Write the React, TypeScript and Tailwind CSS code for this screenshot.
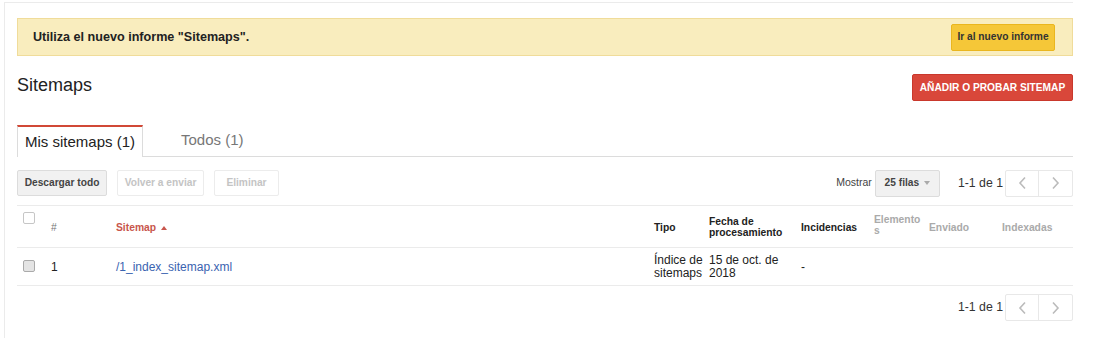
import React from 'react'

const FONT = { fontFamily: '"Liberation Sans", Arial, sans-serif' }

const COLS = 'grid grid-cols-[28px_65px_538px_55px_92px_73px_55px_73px_77px]'

function Pager() {
  return (
    <div className="flex items-center">
      <span className="text-[12.3px] text-[#333] mr-[2px]">1-1 de 1</span>
      <div className="flex h-[27px] border border-[#e8e8e8] rounded-[2px]">
        <button className="w-[33px] flex items-center justify-center border-r border-[#e8e8e8] text-[#bbb]">
          <svg width="9" height="14" viewBox="0 0 9 14" fill="none" stroke="currentColor" strokeWidth="1.6">
            <path d="M7 1.5L2 7l5 5.5" />
          </svg>
        </button>
        <button className="w-[33px] flex items-center justify-center text-[#bbb]">
          <svg width="9" height="14" viewBox="0 0 9 14" fill="none" stroke="currentColor" strokeWidth="1.6">
            <path d="M2 1.5L7 7l-5 5.5" />
          </svg>
        </button>
      </div>
    </div>
  )
}

function Checkbox({ filled }: { filled?: boolean }) {
  return (
    <span
      className={`inline-block w-[12px] h-[12px] border rounded-[2px] ${
        filled ? 'border-[#aaa] bg-[#e4e4e4]' : 'border-[#c6c6c6] bg-white'
      }`}
    />
  )
}

export default function App() {
  return (
    <div className="bg-white w-[1100px] h-[338px] pl-[4px] pt-[2px] overflow-hidden" style={FONT}>
      <div className="border-l border-t border-[#ebebeb] w-[1069px] h-[336px] pl-[12px] pt-[15px]">
        {/* banner */}
        <div className="w-[1056px] h-[38px] bg-[#f9edbe] border border-[#f0dc9a] flex items-center justify-between pl-[15px] pr-[17px]">
          <span className="text-[12.6px] font-bold text-[#222]">Utiliza el nuevo informe "Sitemaps".</span>
          <button className="h-[27px] w-[104px] bg-[#f5c738] border border-[#eab61e] rounded-[2px] text-[10.2px] font-bold text-[#333]">
            Ir al nuevo informe
          </button>
        </div>

        {/* title */}
        <div className="w-[1056px] flex items-center justify-between mt-[18px] h-[27px]">
          <h1 className="text-[18px] text-[#222] font-normal -mt-[4px]">Sitemaps</h1>
          <button className="h-[27px] w-[161px] bg-[#d9473a] border border-[#c9382c] rounded-[2px] text-[10.2px] font-bold text-white">
            AÑADIR O PROBAR SITEMAP
          </button>
        </div>

        {/* tabs */}
        <div className="w-[1056px] flex items-end mt-[24px] border-b border-[#dcdcdc] h-[32px]">
          <div className="h-[32px] w-[126px] -mb-px bg-white border-t-2 border-t-[#d14836] border-l border-r border-[#dcdcdc] flex items-center justify-center text-[15px] text-[#222]">
            Mis sitemaps (1)
          </div>
          <div className="h-[32px] flex items-center text-[15px] text-[#777] ml-[38px]">Todos (1)</div>
        </div>

        {/* toolbar */}
        <div className="w-[1056px] flex items-center justify-between mt-[13px] h-[26px]">
          <div className="flex items-center gap-[10px]">
            <button className="h-[26px] w-[90px] bg-[#f1f1f1] border border-[#dcdcdc] rounded-[2px] text-[10.2px] font-bold text-[#444]">
              Descargar todo
            </button>
            <button className="h-[26px] w-[87px] bg-white border border-[#ececec] rounded-[2px] text-[10.2px] font-bold text-[#c4c4c4]">
              Volver a enviar
            </button>
            <button className="h-[26px] w-[65px] bg-white border border-[#ececec] rounded-[2px] text-[10.2px] font-bold text-[#c4c4c4]">
              Eliminar
            </button>
          </div>
          <div className="flex items-center">
            <span className="text-[10.5px] text-[#444] mr-[3px]">Mostrar</span>
            <button className="h-[27px] w-[65px] bg-[#f1f1f1] border border-[#dcdcdc] rounded-[2px] text-[10.2px] font-bold text-[#444] flex items-center justify-center gap-[5px] mr-[18px]">
              25 filas
              <span className="inline-block w-0 h-0 border-l-[3px] border-r-[3px] border-t-[4px] border-l-transparent border-r-transparent border-t-[#aaa]" />
            </button>
            <Pager />
          </div>
        </div>

        {/* table */}
        <div className="w-[1056px] mt-[9px] border-t border-[#ebebeb]">
          <div className={`${COLS} h-[42px] border-b border-[#ebebeb] text-[10.3px] font-bold text-[#222] items-center`}>
            <div className="pl-[6px] self-start pt-[6px]"><Checkbox /></div>
            <div className="pl-[6px] pt-[2px] text-[#777] font-normal">#</div>
            <div className="pl-[6px] pt-[2px] text-[#c8564c] flex items-center gap-[5px]">
              Sitemap
              <span className="inline-block w-0 h-0 border-l-[3px] border-r-[3px] border-b-[4px] border-l-transparent border-r-transparent border-b-[#c8564c]" />
            </div>
            <div className="pl-[6px] pt-[2px]">Tipo</div>
            <div className="pl-[6px] leading-[11px]">Fecha de<br />procesamiento</div>
            <div className="pl-[6px] pt-[2px]">Incidencias</div>
            <div className="pl-[6px] leading-[11px] text-[#aaa] -mt-[3px]">Elemento<br />s</div>
            <div className="pl-[6px] pt-[2px] text-[#aaa]">Enviado</div>
            <div className="pl-[6px] pt-[2px] text-[#aaa]">Indexadas</div>
          </div>
          <div className={`${COLS} h-[38px] border-b border-[#ebebeb] text-[12px] text-[#222] items-center`}>
            <div className="pl-[6px] pt-[3px]"><Checkbox filled /></div>
            <div className="pl-[6px]">1</div>
            <div className="pl-[6px] text-[#3a63b0]">/1_index_sitemap.xml</div>
            <div className="pl-[6px] leading-[13px]">Índice de<br />sitemaps</div>
            <div className="pl-[6px] leading-[13px]">15 de oct. de<br />2018</div>
            <div className="pl-[6px]">-</div>
            <div />
            <div />
            <div />
          </div>
        </div>

        <div className="w-[1056px] flex justify-end mt-[8px]">
          <Pager />
        </div>
      </div>
    </div>
  )
}
